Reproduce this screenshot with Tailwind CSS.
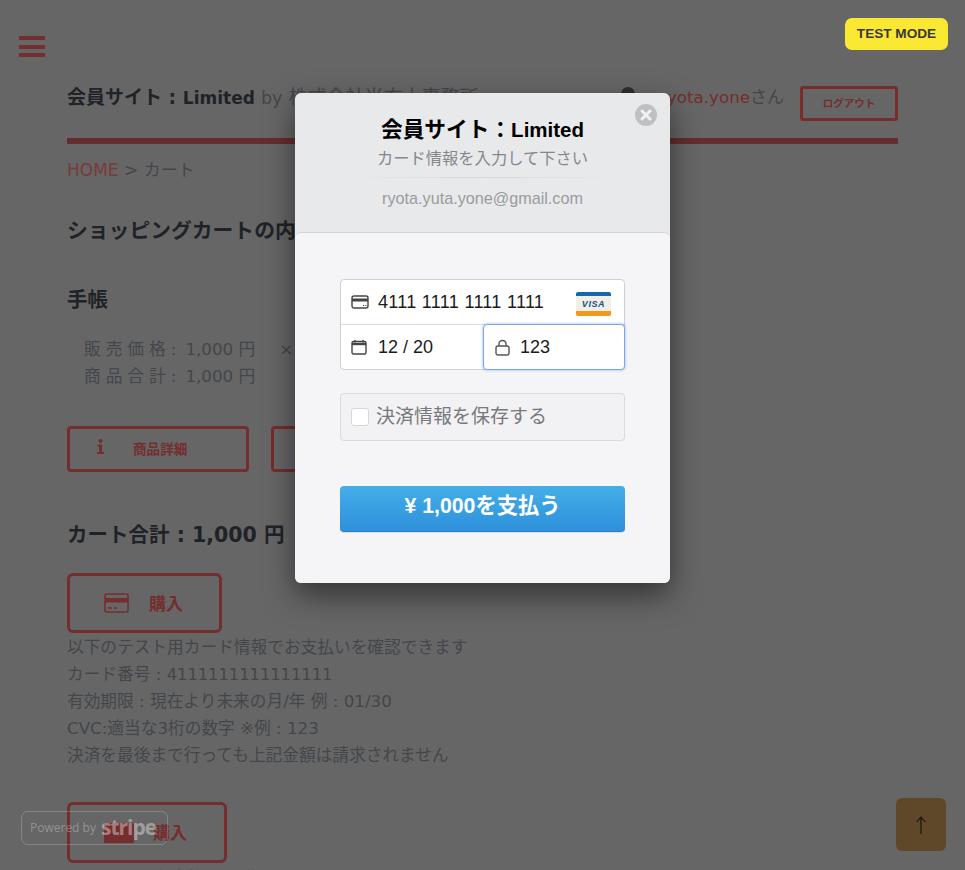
<!DOCTYPE html>
<html lang="ja">
<head>
    <meta charset="UTF-8">
    <title>カート</title>
    <script src="https://cdn.jsdelivr.net/npm/@tailwindcss/browser@4"></script>
</head>
<body class="bg-[#666666] text-[#43474c] font-['DejaVu_Sans','Noto_Sans_CJK_JP',sans-serif] h-[870px] w-[965px] overflow-hidden relative">

    <!-- Page behind the modal -->
    <div class="h-[870px] overflow-hidden">
        <div class="pt-[36px] pl-[19px]">
            <div class="w-[26px] flex flex-col gap-[4.5px]">
                <div class="h-[4px] bg-[#742e2e]"></div>
                <div class="h-[4px] bg-[#742e2e]"></div>
                <div class="h-[4px] bg-[#742e2e]"></div>
            </div>
        </div>

        <div class="ml-[67px] w-[831px]">
            <header class="mt-[29px] h-[35px] flex items-start justify-between">
                <p class="text-[19px] leading-[24px] -mt-px whitespace-nowrap"><span class="font-bold text-[#1f2328]">会員サイト : <span class="text-[17px]">Limited</span></span> <span class="text-[17.5px]">by</span> 株式会社当方土事務所</p>
                <div class="flex items-start gap-[16px]">
                    <p class="flex items-center text-[16.7px] leading-[24px] -mt-px">
                        <span class="w-[14px] h-[14px] rounded-full bg-[#2c2e31] mr-[25px] -mt-[6px]"></span>
                        <span class="text-[#742e2e]">ryota.yone</span><span class="text-[17px]">さん</span>
                    </p>
                    <div class="w-[98px] h-[35px] border-[3px] border-[#742e2e] rounded-[3px] flex items-center justify-center text-[10.5px] font-bold text-[#742e2e]">ログアウト</div>
                </div>
            </header>
            <div class="h-[6px] bg-[#652d2d] mt-[17px]"></div>
            <p class="mt-[14px] text-[17px] leading-[24px]"><span class="text-[#7a3a3a]">HOME</span> &gt; カート</p>

            <h2 class="mt-[35px] text-[20.8px] leading-[28px] font-bold text-[#1f2328]">ショッピングカートの内容</h2>
            <h3 class="mt-[41px] text-[20.5px] leading-[28px] font-bold text-[#1f2328]">手帳</h3>

            <div class="mt-[22px] ml-[17px] text-[16.7px] leading-[27px] whitespace-nowrap">
                <p><span class="tracking-[5px]">販売価格</span>:<span class="ml-[9px]">1,000 円</span><span class="ml-[24px]">×</span></p>
                <p><span class="tracking-[5px]">商品合計</span>:<span class="ml-[9px]">1,000 円</span></p>
            </div>

            <div class="mt-[36px] flex gap-[22px]">
                <div class="w-[182px] h-[46px] border-[3px] border-[#742e2e] rounded-[4px] flex items-center text-[#742e2e]">
                    <svg class="ml-[27px] -mt-[6px]" width="7" height="15" viewBox="0 0 7 15" fill="#742e2e">
                        <circle cx="3.5" cy="2" r="2"/>
                        <path d="M0.5 5.5h4.5v7.5h2V15H0v-2h2V7.5H0.5z"/>
                    </svg>
                    <span class="ml-[29px] text-[13.6px] font-bold">商品詳細</span>
                </div>
                <div class="w-[182px] h-[46px] border-[3px] border-[#742e2e] rounded-[4px]"></div>
            </div>

            <h2 class="mt-[49px] text-[20.5px] leading-[28px] font-bold text-[#1f2328]">カート合計 : 1,000 円</h2>

            <div class="mt-[24px] w-[155px] h-[60px] border-[3px] border-[#742e2e] rounded-[6px] flex items-center text-[#742e2e]">
                <svg class="ml-[34px]" width="25" height="20" viewBox="0 0 25 20" fill="none">
                    <rect x="1" y="1" width="23" height="18" rx="1.5" stroke="#742e2e" stroke-width="1.6"/>
                    <rect x="1" y="5" width="23" height="4.5" fill="#742e2e"/>
                    <path d="M4 15h4M10 15h3" stroke="#742e2e" stroke-width="1.4"/>
                </svg>
                <span class="ml-[20px] mt-[3px] text-[17px] font-bold">購入</span>
            </div>

            <div class="text-[16.7px] leading-[27px] mt-[1px]">
                <p>以下のテスト用カード情報でお支払いを確認できます</p>
                <p>カード番号 : <span class="text-[16.3px]">4111111111111111</span></p>
                <p>有効期限 : 現在より未来の月/年 例 : 01/30</p>
                <p>CVC:適当な3桁の数字 ※例 : 123</p>
                <p>決済を最後まで行っても上記金額は請求されません</p>
            </div>

            <div class="mt-[33px] w-[160px] h-[61px] border-[3px] border-[#742e2e] rounded-[6px] flex items-center text-[#742e2e]">
                <div class="ml-[34px] w-[30px] h-[20px] mt-[1px] bg-[#742e2e] rounded-[1px]"></div>
                <span class="ml-[19px] mt-[3px] text-[17px] font-bold">購入</span>
            </div>
            <p class="mt-[2px] text-[16.7px] leading-[27px]">PayPalでのお支払いを確認できます</p>
        </div>
    </div>

    <!-- Overlays -->
    <div class="absolute left-[845px] top-[18px] w-[103px] h-[32px] rounded-[7px] bg-[#fbe832] flex items-center justify-center text-[13.6px] font-bold text-[#39393a] font-['Liberation_Sans',sans-serif]">TEST MODE</div>

    <div class="absolute left-[21px] top-[811px] w-[147px] h-[34px] rounded-[7px] border border-white/20 flex items-center whitespace-nowrap text-white/30 font-['Open_Sans',sans-serif]">
        <span class="ml-[8px] text-[12px]">Powered by</span>
        <span class="ml-[5px] text-[21px] leading-none font-bold -mt-[1px] tracking-[-1px] text-white/40">stripe</span>
    </div>

    <div class="absolute left-[896px] top-[798px] w-[50px] h-[53px] rounded-[6px] bg-[#5f4829] flex items-center justify-center">
        <svg width="10" height="18" viewBox="0 0 10 18" fill="none" stroke="#111111" stroke-width="1.1">
            <path d="M5 1v17M0.7 6 5 1l4.3 5"/>
        </svg>
    </div>

    <!-- Checkout modal -->
    <div class="absolute left-[295px] top-[93px] w-[375px] h-[490px] rounded-[6px] bg-[#e8e9eb] shadow-[0_12px_30px_rgba(0,0,0,0.5)] font-['Liberation_Sans','Noto_Sans_CJK_JP',sans-serif]">
        <div class="absolute right-[13px] top-[11px] w-[22px] h-[22px] rounded-full bg-[#bfc0c2] flex items-center justify-center">
            <svg width="12" height="12" viewBox="0 0 12 12" stroke="#f1f1f2" stroke-width="3" stroke-linecap="round">
                <path d="M2 2l8 8M10 2l-8 8"/>
            </svg>
        </div>

        <div class="h-[139px] flex flex-col items-center">
            <h1 class="mt-[23px] text-[21.7px] leading-[28px] font-bold text-black">会員サイト：<span class="text-[20.5px]">Limited</span></h1>
            <p class="text-[16.3px] leading-[22px] mt-[3px] text-[#85878b]">カード情報を入力して下さい</p>
            <div class="mt-[8px] w-[270px] h-px bg-[linear-gradient(to_right,transparent,#d6d7d9,transparent)]"></div>
            <p class="mt-[10px] text-[16.2px] leading-[20px] text-[#9a9b9e]">ryota.yuta.yone@gmail.com</p>
        </div>

        <div class="h-[351px] rounded-[6px] bg-[#f5f5f7] border-t border-[#d3d4d7] pt-[46px] px-[45px]">
            <div class="rounded-[4px] border border-[#cfd0d3] bg-white h-[91px] relative">
                <div class="h-[45px] border-b border-[#dcdcdf] flex items-center pl-[10px]">
                    <svg width="18" height="14" viewBox="0 0 18 14" fill="none">
                        <rect x="1" y="1" width="16" height="12" rx="2" stroke="#444" stroke-width="1.4"/>
                        <rect x="1" y="3.5" width="16" height="3" fill="#444"/>
                        <path d="M12 10.5h1.2M14.3 10.5h1.2" stroke="#444"/>
                    </svg>
                    <span class="ml-[9px] text-[18px] tracking-[0.3px] text-[#1b1b1b]">4111 1111 1111 1111</span>
                    <svg class="ml-auto mr-[13px] mt-[3px]" width="35" height="24" viewBox="0 0 35 24">
                        <rect width="35" height="24" rx="2" fill="#f1efe6"/>
                        <path d="M0 4V2a2 2 0 0 1 2-2h31a2 2 0 0 1 2 2v2z" fill="#1466ad"/>
                        <path d="M0 19v3a2 2 0 0 0 2 2h31a2 2 0 0 0 2-2v-3z" fill="#ee9a1f"/>
                        <text x="17.5" y="15" text-anchor="middle" font-size="9" font-weight="700" font-style="italic" letter-spacing="0.6" font-family="Liberation Sans" fill="#17508f">VISA</text>
                    </svg>
                </div>
                <div class="h-[44px] flex">
                    <div class="w-[142px] flex items-center pl-[10px]">
                        <svg width="16" height="16" viewBox="0 0 16 16" fill="none">
                            <rect x="1" y="2.5" width="14" height="12.5" rx="1.5" stroke="#444" stroke-width="1.4"/>
                            <path d="M1 5h14" stroke="#444" stroke-width="2.4"/>
                            <path d="M4 1v2.5M12 1v2.5" stroke="#444" stroke-width="1.4"/>
                        </svg>
                        <span class="ml-[11px] text-[18px] text-[#1b1b1b]">12 / 20</span>
                    </div>
                </div>
                <div class="absolute left-[142px] top-[44px] w-[142px] h-[46px] rounded-[4px] bg-white border-[1.5px] border-[#7ba7e0] shadow-[0_0_3px_rgba(90,150,230,0.7)] flex items-center pl-[11px]">
                    <svg width="15" height="17" viewBox="0 0 15 17" fill="none" stroke="#555" stroke-width="1.4">
                        <rect x="1" y="7" width="13" height="9" rx="2"/>
                        <path d="M4 7V5a3.5 3.5 0 0 1 7 0v2"/>
                    </svg>
                    <span class="ml-[10px] text-[18px] text-[#1b1b1b]">123</span>
                </div>
            </div>

            <div class="mt-[23px] h-[48px] rounded-[4px] border border-[#d9dadd] bg-[#f2f2f4] flex items-center pl-[10px]">
                <div class="w-[18px] h-[18px] rounded-[3px] bg-white border border-[#d5d6d9]"></div>
                <span class="ml-[7px] text-[19px] text-[#77797d]">決済情報を保存する</span>
            </div>

            <div class="mt-[45px] h-[46px] pb-[3px] rounded-[4px] bg-[linear-gradient(to_bottom,#44aee8,#2d90dc)] border-b border-[#2b80c6] shadow-[0_1px_1px_rgba(0,0,0,0.1)] flex items-center justify-center text-[21.3px] font-bold text-white">¥ 1,000を支払う</div>
        </div>
    </div>

</body>
</html>
